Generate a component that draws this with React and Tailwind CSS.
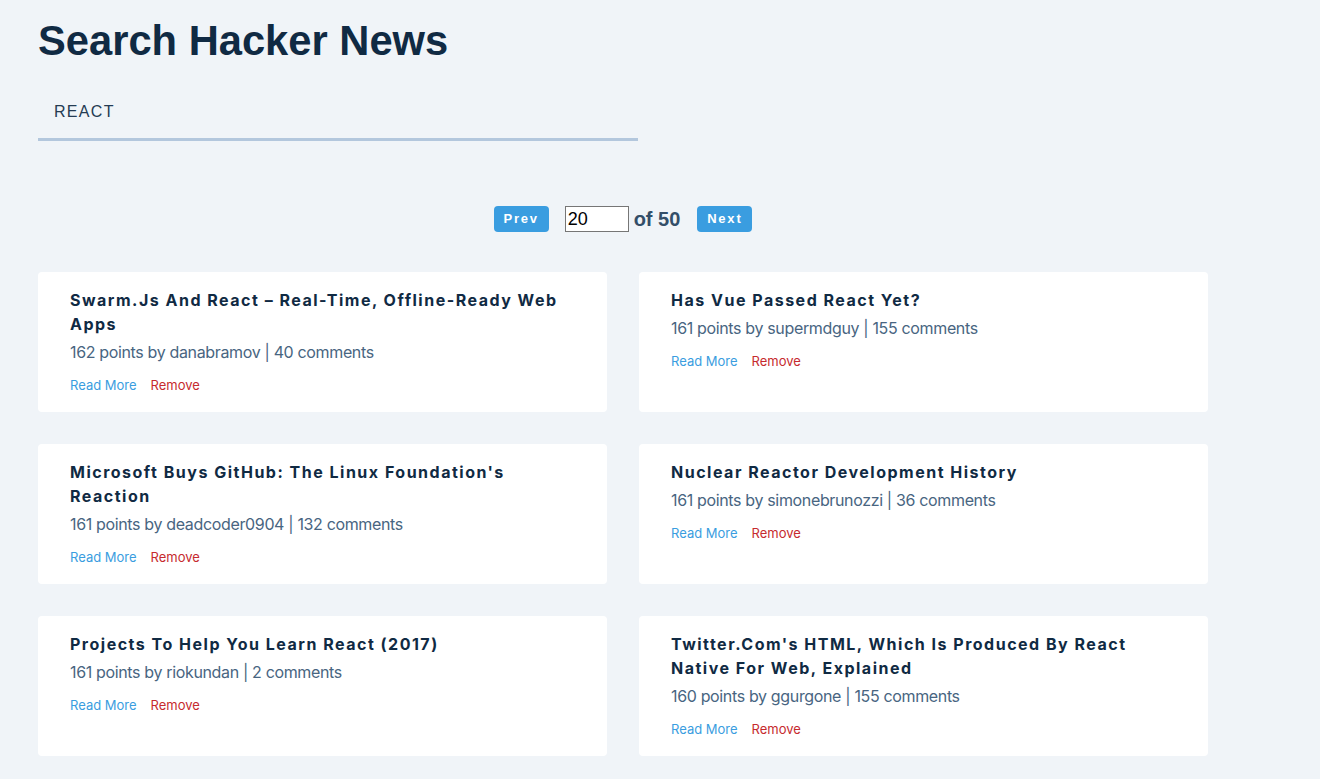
import { useState } from "react";

const stories = [
  { id: 1, title: "Swarm.Js And React – Real-Time, Offline-Ready Web Apps", points: 162, author: "danabramov", comments: 40 },
  { id: 2, title: "Has Vue Passed React Yet?", points: 161, author: "supermdguy", comments: 155 },
  { id: 3, title: "Microsoft Buys GitHub: The Linux Foundation's Reaction", points: 161, author: "deadcoder0904", comments: 132 },
  { id: 4, title: "Nuclear Reactor Development History", points: 161, author: "simonebrunozzi", comments: 36 },
  { id: 5, title: "Projects To Help You Learn React (2017)", points: 161, author: "riokundan", comments: 2 },
  { id: 6, title: "Twitter.Com's HTML, Which Is Produced By React Native For Web, Explained", points: 160, author: "ggurgone", comments: 155 },
];

export default function App() {
  const [query, setQuery] = useState("react");
  const [page, setPage] = useState(20);
  const [items, setItems] = useState(stories);

  return (
    <div className="min-h-screen bg-[#f0f4f8] px-[38px] pt-[13px] pb-10 font-['Inter',sans-serif]">
      <div className="w-[1170px]">
        <h1 className="text-[41.7px] leading-[56px] font-bold text-[#102a43] font-['Liberation_Sans',Arial,sans-serif]">
          Search Hacker News
        </h1>

        {/* поиск */}
        <div className="mt-[21px] w-[600px]">
          <input
            value={query}
            onChange={(e) => setQuery(e.target.value)}
            className="w-full bg-transparent outline-none border-0 border-b-[3px] border-[#b3c7dd] px-4 pt-[12px] pb-[16px] text-[16px] leading-[20px] uppercase tracking-[1.3px] text-[#243b53] font-['Liberation_Sans',Arial,sans-serif]"
          />
        </div>

        {/* пагинация */}
        <div className="mt-[65px] flex items-center justify-center font-['Liberation_Sans',Arial,sans-serif]">
          <button
            onClick={() => setPage((p) => Math.max(1, p - 1))}
            className="w-[55px] h-[26px] rounded-[4px] bg-[#3a9de0] text-white text-[13px] font-bold tracking-[1.8px]"
          >
            Prev
          </button>
          <input
            value={page}
            onChange={(e) => setPage(e.target.value)}
            className="ml-4 w-[64px] h-[26px] bg-white border border-[#767676] px-[2px] text-[18px] text-black outline-none"
          />
          <span className="ml-[5px] text-[20px] leading-none font-bold text-[#334e68]">of 50</span>
          <button
            onClick={() => setPage((p) => Math.min(50, Number(p) + 1))}
            className="ml-[17px] w-[55px] h-[26px] rounded-[4px] bg-[#3a9de0] text-white text-[13px] font-bold tracking-[1.8px]"
          >
            Next
          </button>
        </div>

        {/* карточки */}
        <div className="mt-[40px] grid grid-cols-2 gap-8">
          {items.map((s) => (
            <div key={s.id} className="bg-white rounded-[4px] px-8 pt-4 pb-4 min-h-[140px]">
              <h2 className="text-[16px] leading-[24px] font-bold tracking-[1.5px] text-[#102a43]">{s.title}</h2>
              <p className="mt-[4px] text-[16px] leading-[24px] tracking-[-0.35px] text-[#486581]">
                {s.points} points by {s.author} | {s.comments} comments
              </p>
              <div className="mt-[11px] flex gap-[14px] text-[13px] leading-[20px]">
                <a href="#" className="text-[#3a9de0]">Read More</a>
                <button onClick={() => setItems((prev) => prev.filter((x) => x.id !== s.id))} className="text-[#c62a2e]">
                  Remove
                </button>
              </div>
            </div>
          ))}
        </div>
      </div>
    </div>
  );
}
